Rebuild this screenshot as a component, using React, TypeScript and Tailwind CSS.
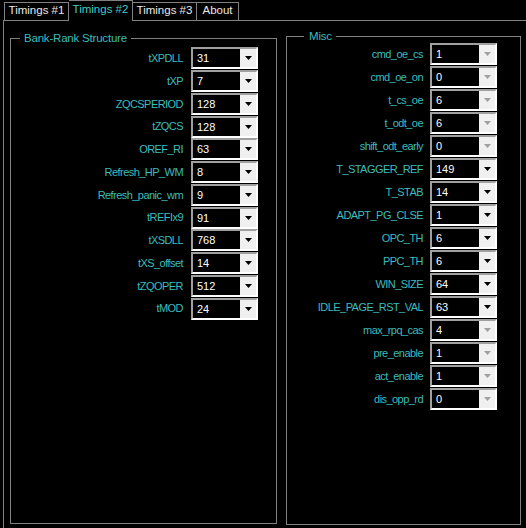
import React from 'react';

const bankRank = [
  ['tXPDLL', '31'],
  ['tXP', '7'],
  ['ZQCSPERIOD', '128'],
  ['tZQCS', '128'],
  ['OREF_RI', '63'],
  ['Refresh_HP_WM', '8'],
  ['Refresh_panic_wm', '9'],
  ['tREFIx9', '91'],
  ['tXSDLL', '768'],
  ['tXS_offset', '14'],
  ['tZQOPER', '512'],
  ['tMOD', '24'],
];

const misc: [string, string, boolean][] = [
  ['cmd_oe_cs', '1', true],
  ['cmd_oe_on', '0', true],
  ['t_cs_oe', '6', true],
  ['t_odt_oe', '6', true],
  ['shift_odt_early', '0', true],
  ['T_STAGGER_REF', '149', false],
  ['T_STAB', '14', false],
  ['ADAPT_PG_CLSE', '1', false],
  ['OPC_TH', '6', false],
  ['PPC_TH', '6', false],
  ['WIN_SIZE', '64', false],
  ['IDLE_PAGE_RST_VAL', '63', false],
  ['max_rpq_cas', '4', true],
  ['pre_enable', '1', true],
  ['act_enable', '1', true],
  ['dis_opp_rd', '0', true],
];

const Combo: React.FC<{ value: string; disabled?: boolean }> = ({ value, disabled }) => (
  <div className="flex h-[22px] w-[67px] shrink-0 border-2 border-t-[#a0a0a0] border-l-[#a0a0a0] border-b-white border-r-white bg-black">
    <span className="flex-1 pl-[4px] text-[11px] leading-[18px] text-white">{value}</span>
    <div className="flex w-[16px] items-center justify-center bg-[#f0f0f0]">
      <svg width="7" height="4" viewBox="0 0 7 4">
        <path d="M0 0h7L3.5 4z" fill={disabled ? '#a0a0a0' : '#000000'} />
      </svg>
    </div>
  </div>
);

const App: React.FC = () => {
  return (
    <div
      className="flex h-[528px] w-[526px] flex-col overflow-hidden bg-black text-[11px]"
      style={{ fontFamily: '"Liberation Sans", Arial, sans-serif' }}
    >
      {/* tab strip */}
      <div className="flex h-[21px] items-end pl-[3px]">
        <div className="h-px w-px bg-[#808080]" />
        <div className="flex h-[19px] w-[65px] items-center justify-center border border-[#808080] pb-px text-[11.5px] text-[#e8e8e8]">
          Timings #1
        </div>
        <div className="flex h-[21px] w-[64px] items-center justify-center border border-b-0 border-l-0 border-[#808080] pb-[2px] text-[11.5px] text-[#45c8c8]">
          Timings #2
        </div>
        <div className="flex h-[19px] w-[64px] items-center justify-center border border-l-0 border-[#808080] pb-px text-[11.5px] text-[#e8e8e8]">
          Timings #3
        </div>
        <div className="flex h-[19px] w-[42px] items-center justify-center border border-l-0 border-[#808080] pb-px text-[11.5px] text-[#e8e8e8]">
          About
        </div>
        <div className="h-px flex-1 bg-[#808080]" />
      </div>

      {/* tab page */}
      <div className="ml-[3px] flex flex-1 items-start border-l border-[#808080] pl-[6px]">
        {/* Bank-Rank Structure */}
        <div className="mt-[17px] h-[486px] w-[267px] border border-[#808080]">
          <div className="-mt-[8px] ml-[9px] w-fit bg-black px-[4px] text-[11.5px] leading-[14px] tracking-[-0.2px] text-[#3cbcbc]">
            Bank-Rank Structure
          </div>
          <div className="mt-[2px] flex flex-col">
            {bankRank.map(([label, value]) => (
              <div key={label} className="flex h-[22.75px] items-center">
                <span className="w-[173px] pr-px text-right text-[11px] tracking-[-0.55px] text-[#3cbcbc]">{label}</span>
                <div className="ml-[7px]">
                  <Combo value={value} />
                </div>
              </div>
            ))}
          </div>
        </div>

        {/* Misc */}
        <div className="ml-[9px] mt-[15px] h-[489px] w-[235px] border border-[#808080]">
          <div className="-mt-[8px] ml-[17px] w-fit bg-black pl-[5px] pr-[4px] text-[11.5px] leading-[14px] tracking-[-0.2px] text-[#3cbcbc]">
            Misc
          </div>
          <div className="mt-[-0.5px] flex flex-col">
            {misc.map(([label, value, disabled]) => (
              <div key={label} className="flex h-[23px] items-center">
                <span className="w-[136px] text-right text-[11px] tracking-[-0.55px] text-[#3cbcbc]">{label}</span>
                <div className="ml-[7px]">
                  <Combo value={value} disabled={disabled} />
                </div>
              </div>
            ))}
          </div>
        </div>
      </div>
    </div>
  );
};

export default App;
